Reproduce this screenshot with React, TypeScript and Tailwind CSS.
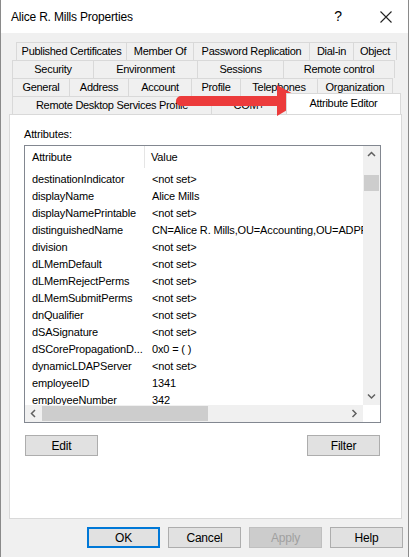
import React from 'react';

const rows: [string, string][] = [
  ['destinationIndicator', '<not set>'],
  ['displayName', 'Alice Mills'],
  ['displayNamePrintable', '<not set>'],
  ['distinguishedName', 'CN=Alice R. Mills,OU=Accounting,OU=ADPRO Users,DC=ad,DC=activedirectorypro,DC=com'],
  ['division', '<not set>'],
  ['dLMemDefault', '<not set>'],
  ['dLMemRejectPerms', '<not set>'],
  ['dLMemSubmitPerms', '<not set>'],
  ['dnQualifier', '<not set>'],
  ['dSASignature', '<not set>'],
  ['dSCorePropagationD...', '0x0 = (  )'],
  ['dynamicLDAPServer', '<not set>'],
  ['employeeID', '1341'],
  ['employeeNumber', '342'],
];

type Tab = { label: string; w: string };

const tabRows: { ml: string; tabs: Tab[] }[] = [
  {
    ml: 'ml-[15px]',
    tabs: [
      { label: 'Published Certificates', w: 'w-[111px]' },
      { label: 'Member Of', w: 'w-[68px]' },
      { label: 'Password Replication', w: 'w-[117px]' },
      { label: 'Dial-in', w: 'w-[45px]' },
      { label: 'Object', w: 'w-[44px]' },
    ],
  },
  {
    ml: 'ml-[11px]',
    tabs: [
      { label: 'Security', w: 'w-[82px]' },
      { label: 'Environment', w: 'w-[105px]' },
      { label: 'Sessions', w: 'w-[87px]' },
      { label: 'Remote control', w: 'w-[112px]' },
    ],
  },
  {
    ml: 'ml-[11px]',
    tabs: [
      { label: 'General', w: 'w-[58px]' },
      { label: 'Address', w: 'w-[60px]' },
      { label: 'Account', w: 'w-[64px]' },
      { label: 'Profile', w: 'w-[50px]' },
      { label: 'Telephones', w: 'w-[78px]' },
      { label: 'Organization', w: 'w-[76px]' },
    ],
  },
];

function WinButton({ label, variant = 'normal' }: { label: string; variant?: 'normal' | 'default' | 'disabled' }) {
  const look =
    variant === 'default'
      ? 'border-2 border-[#0078d7] bg-[#e1e1e1] text-black'
      : variant === 'disabled'
        ? 'border border-[#bfbfbf] bg-[#cccccc] text-[#a0a0a0]'
        : 'border border-[#adadad] bg-[#e1e1e1] text-black';
  return (
    <div className={`flex items-center justify-center w-[73px] h-[21px] text-[12px] tracking-[-0.2px] ${look}`}>
      {label}
    </div>
  );
}

function Chevron({ dir }: { dir: 'up' | 'down' | 'left' | 'right' }) {
  const d = {
    up: 'M1 5 L4.5 1.5 L8 5',
    down: 'M1 1.5 L4.5 5 L8 1.5',
    left: 'M5 1 L1.5 4.5 L5 8',
    right: 'M1.5 1 L5 4.5 L1.5 8',
  }[dir];
  const vert = dir === 'up' || dir === 'down';
  return (
    <svg
      viewBox={vert ? '0 0 9 7' : '0 0 7 9'}
      width={vert ? 9 : 7}
      height={vert ? 7 : 9}
      fill="none"
      stroke="#606060"
      strokeWidth="1.5"
    >
      <path d={d} />
    </svg>
  );
}

export default function App() {
  return (
    <div
      className="relative w-[409px] h-[557px] bg-[#f0f0f0] border-x border-[#8a8a8a] flex flex-col overflow-hidden text-black"
      style={{ fontFamily: '"Liberation Sans", Arial, sans-serif' }}
    >
      {/* title bar */}
      <div className="h-[33px] bg-white flex items-center shrink-0">
        <span className="ml-[10px] text-[12px] tracking-[-0.2px]">Alice R. Mills Properties</span>
        <span className="ml-auto text-[14px] mr-[38px]">?</span>
        <svg width="12" height="12" viewBox="0 0 12 12" className="mr-[16px]" stroke="#222" strokeWidth="1.1">
          <path d="M0.5 0.5 L11.5 11.5 M11.5 0.5 L0.5 11.5" />
        </svg>
      </div>

      {/* tabs */}
      <div className="mt-[9px] flex flex-col text-[11px] tracking-[-0.3px]">
        {tabRows.map((row, i) => (
          <div key={i} className={`flex h-[18px] ${row.ml}`}>
            {row.tabs.map((t, j) => (
              <div
                key={t.label}
                className={`${t.w} ${j > 0 ? '-ml-px' : ''} h-full flex items-center justify-center border border-b-0 border-[#d9d9d9] bg-[#f0f0f0] whitespace-nowrap`}
              >
                {t.label}
              </div>
            ))}
          </div>
        ))}
        <div className="flex h-[18px] ml-[11px]">
          <div className="w-[200px] h-full flex items-center justify-center border border-b-0 border-[#d9d9d9] whitespace-nowrap">
            Remote Desktop Services Profile
          </div>
          <div className="w-[76px] -ml-px h-full flex items-center justify-center border border-b-0 border-[#d9d9d9]">
            COM+
          </div>
          <div className="relative z-10 w-[115px] h-[21px] -mt-[3px] -ml-px flex items-center justify-center bg-white border border-b-0 border-[#d9d9d9] pb-[2px]">
            Attribute Editor
          </div>
        </div>
      </div>

      {/* panel */}
      <div className="ml-[8px] w-[393px] h-[405px] bg-white border border-[#d9d9d9] flex flex-col text-[11px] tracking-[-0.15px]">
        <div className="ml-[14px] mt-[12px] leading-[14px]">Attributes:</div>
        <div className="ml-[14px] mt-[4px] w-[357px] h-[278px] border border-[#828790] flex flex-col">
          <div className="flex flex-1 min-h-0">
            <div className="flex-1 flex flex-col overflow-hidden">
              <div className="h-[22px] flex shrink-0 items-center">
                <div className="w-[120px] h-full pl-[7px] flex items-center border-r border-[#e5e5e5]">Attribute</div>
                <div className="pl-[6px]">Value</div>
              </div>
              <div className="flex flex-col pt-[3px]">
                {rows.map(([a, v]) => (
                  <div key={a} className="h-[17px] flex items-center whitespace-nowrap">
                    <div className="w-[120px] pl-[7px] shrink-0">{a}</div>
                    <div className="pl-[7px]">{v}</div>
                  </div>
                ))}
              </div>
            </div>
            {/* vertical scrollbar */}
            <div className="w-[17px] bg-[#f0f0f0] flex flex-col items-center shrink-0">
              <div className="h-[17px] flex items-center justify-center">
                <Chevron dir="up" />
              </div>
              <div className="mt-[12px] w-[15px] h-[16px] bg-[#cdcdcd]" />
              <div className="mt-auto h-[17px] flex items-center justify-center">
                <Chevron dir="down" />
              </div>
            </div>
          </div>
          {/* horizontal scrollbar */}
          <div className="h-[17px] flex shrink-0">
            <div className="flex-1 bg-[#f0f0f0] flex items-center">
              <div className="w-[17px] flex justify-center">
                <Chevron dir="left" />
              </div>
              <div className="w-[166px] h-[15px] bg-[#cdcdcd]" />
              <div className="ml-auto w-[17px] flex justify-center">
                <Chevron dir="right" />
              </div>
            </div>
            <div className="w-[17px] bg-white" />
          </div>
        </div>
        <div className="ml-[15px] mt-[12px] w-[355px] flex justify-between">
          <WinButton label="Edit" />
          <WinButton label="Filter" />
        </div>
      </div>

      {/* dialog buttons */}
      <div className="mt-[8px] flex justify-end gap-[8px] mr-[5px]">
        <WinButton label="OK" variant="default" />
        <WinButton label="Cancel" />
        <WinButton label="Apply" variant="disabled" />
        <WinButton label="Help" />
      </div>

      {/* red annotation arrow */}
      <svg className="absolute left-[171px] top-[82px] pointer-events-none" width="136" height="38" viewBox="0 0 136 38">
        <path d="M9 14 L105 14 L105 3 L132 18 L105 34 L105 24 L9 24 A5 5 0 0 1 9 14 Z" fill="#ec3b3b" />
      </svg>
    </div>
  );
}
